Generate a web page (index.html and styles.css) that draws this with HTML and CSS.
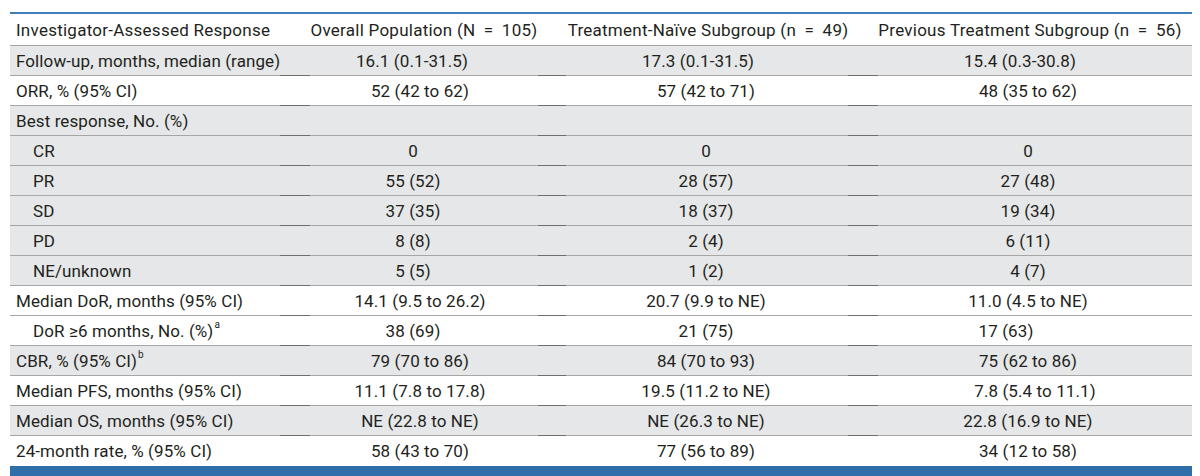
FILE: index.html
```html
<!DOCTYPE html>
<html>
<head>
<meta charset="utf-8">
<link rel="stylesheet" href="styles.css">
</head>
<body>
<div class="table">
  <div class="row head">
    <div class="cell label">Investigator-Assessed Response</div>
    <div class="cell h2">Overall Population (N <span class="eq">=</span> 105)</div>
    <div class="cell h3">Treatment-Naïve Subgroup (n <span class="eq">=</span> 49)</div>
    <div class="cell h3">Previous Treatment Subgroup (n <span class="eq">=</span> 56)</div>
  </div>
  <div class="row shade">
    <div class="cell label">Follow-up, months, median (range)</div>
    <div class="cell l8">16.1 (0.1-31.5)</div>
    <div class="cell l8">17.3 (0.1-31.5)</div>
    <div class="cell l8">15.4 (0.3-30.8)</div>
  </div>
  <div class="row">
    <div class="cell label">ORR, % (95% CI)</div>
    <div class="cell">52 (42 to 62)</div>
    <div class="cell">57 (42 to 71)</div>
    <div class="cell">48 (35 to 62)</div>
  </div>
  <div class="row shade">
    <div class="cell label">Best response, No. (%)</div>
    <div class="cell"></div>
    <div class="cell"></div>
    <div class="cell"></div>
  </div>
  <div class="row shade">
    <div class="cell label sub">CR</div>
    <div class="cell l7">0</div>
    <div class="cell">0</div>
    <div class="cell">0</div>
  </div>
  <div class="row shade">
    <div class="cell label sub">PR</div>
    <div class="cell l7">55 (52)</div>
    <div class="cell">28 (57)</div>
    <div class="cell">27 (48)</div>
  </div>
  <div class="row shade">
    <div class="cell label sub">SD</div>
    <div class="cell l7">37 (35)</div>
    <div class="cell">18 (37)</div>
    <div class="cell">19 (34)</div>
  </div>
  <div class="row shade">
    <div class="cell label sub">PD</div>
    <div class="cell l7">8 (8)</div>
    <div class="cell">2 (4)</div>
    <div class="cell">6 (11)</div>
  </div>
  <div class="row shade">
    <div class="cell label sub">NE/unknown</div>
    <div class="cell l7">5 (5)</div>
    <div class="cell">1 (2)</div>
    <div class="cell">4 (7)</div>
  </div>
  <div class="row">
    <div class="cell label">Median DoR, months (95% CI)</div>
    <div class="cell">14.1 (9.5 to 26.2)</div>
    <div class="cell">20.7 (9.9 to NE)</div>
    <div class="cell">11.0 (4.5 to NE)</div>
  </div>
  <div class="row">
    <div class="cell label sub">DoR ≥6 months, No. (%)<sup>a</sup></div>
    <div class="cell l7">38 (69)</div>
    <div class="cell">21 (75)</div>
    <div class="cell l22">17 (63)</div>
  </div>
  <div class="row shade">
    <div class="cell label">CBR, % (95% CI)<sup>b</sup></div>
    <div class="cell">79 (70 to 86)</div>
    <div class="cell">84 (70 to 93)</div>
    <div class="cell">75 (62 to 86)</div>
  </div>
  <div class="row">
    <div class="cell label">Median PFS, months (95% CI)</div>
    <div class="cell">11.1 (7.8 to 17.8)</div>
    <div class="cell">19.5 (11.2 to NE)</div>
    <div class="cell r7">7.8 (5.4 to 11.1)</div>
  </div>
  <div class="row shade">
    <div class="cell label">Median OS, months (95% CI)</div>
    <div class="cell">NE (22.8 to NE)</div>
    <div class="cell">NE (26.3 to NE)</div>
    <div class="cell">22.8 (16.9 to NE)</div>
  </div>
  <div class="row last">
    <div class="cell label">24-month rate, % (95% CI)</div>
    <div class="cell">58 (43 to 70)</div>
    <div class="cell">77 (56 to 89)</div>
    <div class="cell">34 (12 to 58)</div>
  </div>
  <div class="footbar"></div>
</div>
</body>
</html>
```

FILE: styles.css
```css
html, body {
  margin: 0;
  padding: 0;
  background: #ffffff;
}

body {
  font-family: Roboto, "Liberation Sans", sans-serif;
  font-size: 17px;
  color: #231f20;
}

.table {
  margin: 12px 0 0 10px;
  width: 1182px;
  border-top: 2px solid #3f7fba;
}

.row {
  display: grid;
  grid-template-columns: 270px 222px 292px 294px;
  column-gap: 29px;
  height: 30px;
  box-sizing: border-box;
  padding-bottom: 1px;
  background-image:
    linear-gradient(#6e6e6e, #6e6e6e),
    linear-gradient(#6e6e6e, #6e6e6e),
    linear-gradient(#6e6e6e, #6e6e6e),
    linear-gradient(#a6a6a6, #a6a6a6);
  background-size: 30px 1px, 28px 1px, 30px 1px, 100% 1px;
  background-repeat: no-repeat;
  background-position: 270px 100%, 528px 100%, 838px 100%, 0 100%;
}

.row.head {
  height: 32px;
  background-image: linear-gradient(#a6a6a6, #a6a6a6);
  background-size: 100% 1px;
  background-position: 0 100%;
}

.row.shade {
  background-color: #e6e7e8;
}

.row.last {
  background-image: none;
  padding-bottom: 0;
}

.cell {
  display: flex;
  align-items: center;
  justify-content: center;
  white-space: pre;
  letter-spacing: 0.1px;
}

.cell.label {
  justify-content: flex-start;
  padding-left: 6px;
}

.cell.sub {
  padding-left: 23px;
}

.cell.l7 { padding-right: 14px; }
.cell.l8 { padding-right: 16px; }
.cell.l22 { padding-right: 44px; }
.cell.r7 { padding-left: 14px; }

.head .cell {
  letter-spacing: 0.25px;
}

.head .cell.h2 { padding-left: 8px; }
.head .cell.h3 { padding-left: 4px; }

.eq {
  margin: 0 4px;
}

sup {
  font-size: 10px;
  line-height: 0;
  position: relative;
  top: -6px;
  vertical-align: baseline;
  margin-left: 1px;
}

.footbar {
  height: 10px;
  background: #2f6ea8;
}
```
